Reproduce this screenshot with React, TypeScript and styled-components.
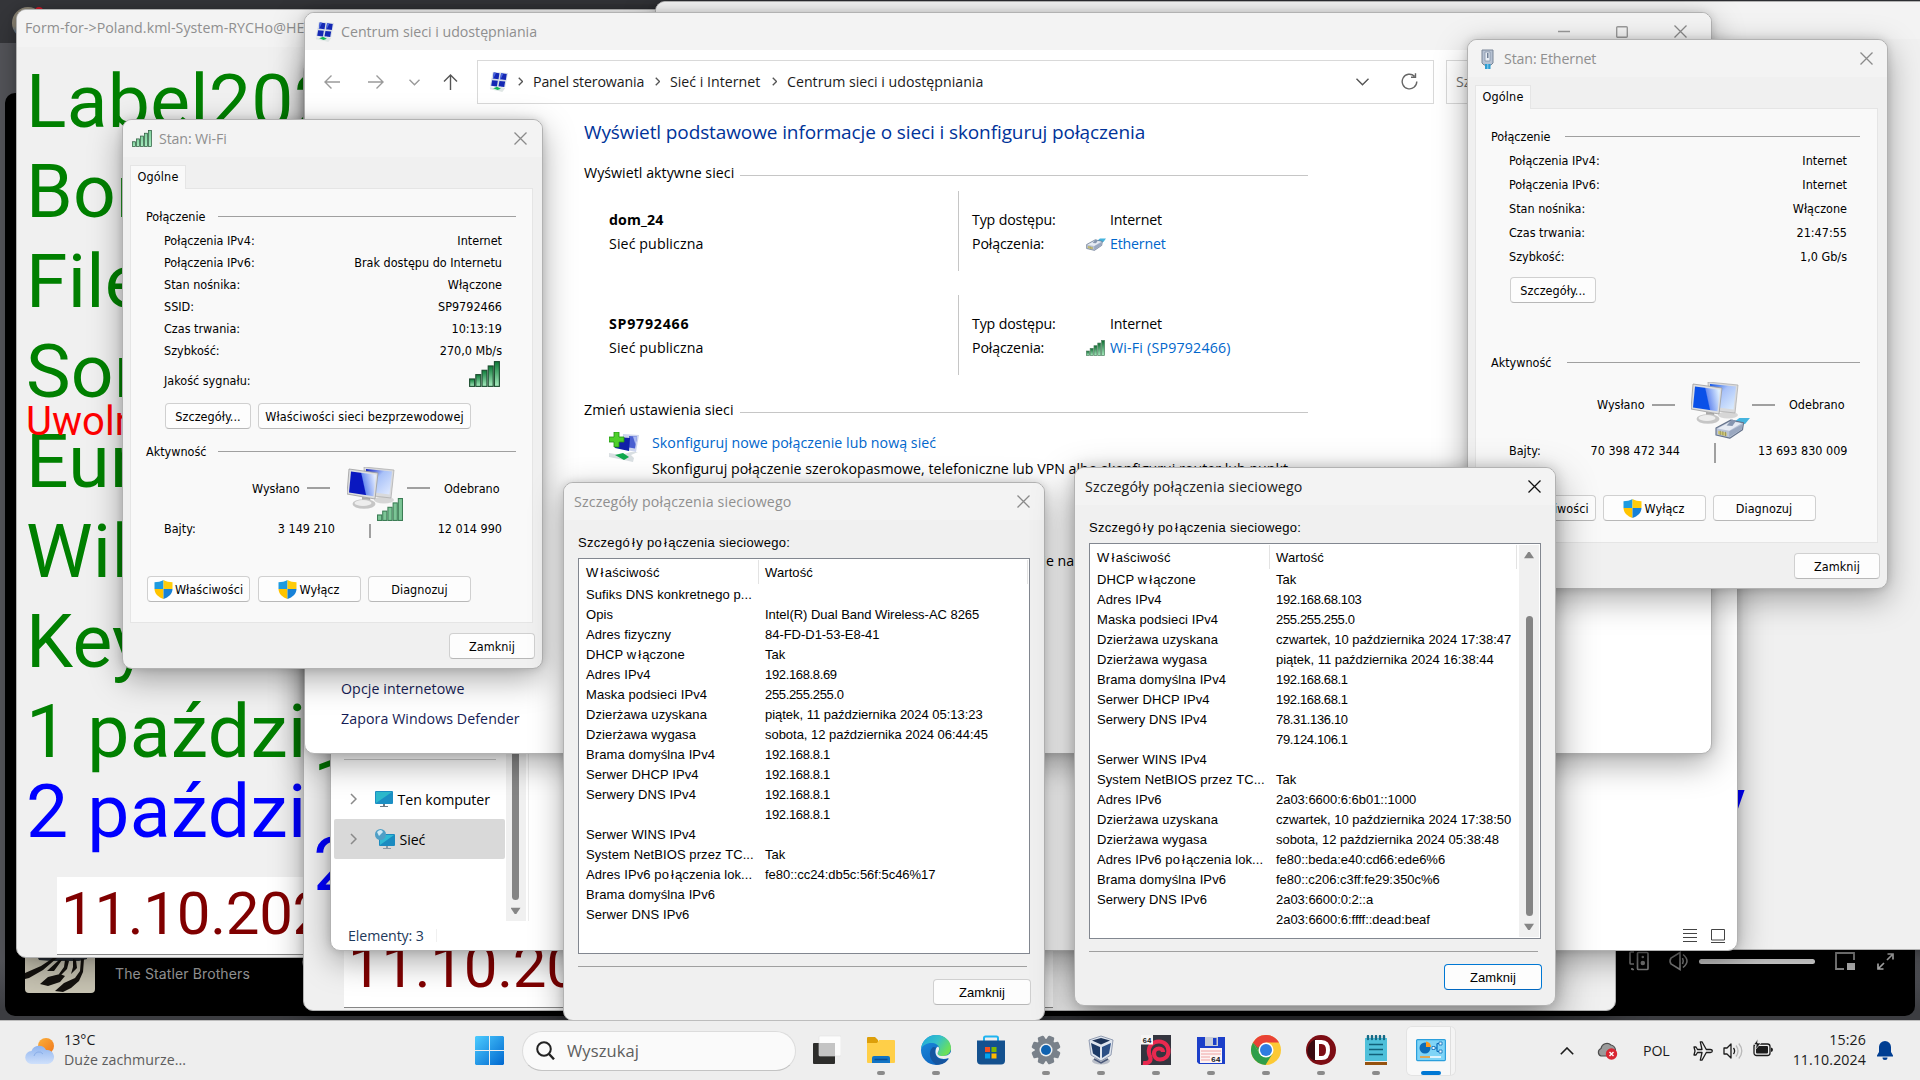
import React from "react";
import styled, { createGlobalStyle, css } from "styled-components";

const GlobalStyle = createGlobalStyle`
  html, body { margin: 0; padding: 0; overflow: hidden; background: #35363a; }
  *, *::before, *::after { box-sizing: border-box; }
  svg { display: block; flex: none; }
`;

const ui = css`
  font-family: "Open Sans", "Noto Sans", sans-serif;
  font-size: 14.2px;
  letter-spacing: 0.04px;
`;
const tahoma = css`
  font-family: "DejaVu Sans Condensed", "DejaVu Sans", sans-serif;
  font-stretch: condensed;
  font-size: 12.5px;
  letter-spacing: 0;
`;

const Desktop = styled.div`
  ${ui}
  position: relative;
  width: 1920px;
  height: 1080px;
  overflow: hidden;
  white-space: nowrap;
  color: #000;
  background: linear-gradient(#35363a 0 43px, #55565b 43px 960px, #3c3d41 1010px, #3c3d41);
`;

/* ---------- window frame ---------- */
const Win = styled.section<{ $x: number; $y: number; $w: number; $h: number; $bg?: string; $active?: boolean }>`
  position: absolute;
  left: ${(p) => p.$x}px;
  top: ${(p) => p.$y}px;
  width: ${(p) => p.$w}px;
  height: ${(p) => p.$h}px;
  display: flex;
  flex-direction: column;
  overflow: hidden;
  border: 1px solid #b2b2b2;
  border-radius: 10px;
  background: ${(p) => p.$bg ?? "#f0f0f0"};
  box-shadow: ${(p) =>
    p.$active ? "0 16px 40px rgba(0,0,0,.42), 0 0 14px rgba(0,0,0,.18)" : "0 10px 32px rgba(0,0,0,.34), 0 0 8px rgba(0,0,0,.14)"};
`;
const TitleBar = styled.header<{ $pad: number; $active?: boolean }>`
  flex: none;
  height: 37px;
  display: flex;
  align-items: center;
  padding-left: ${(p) => p.$pad}px;
  background: #f3f3f3;
  color: ${(p) => (p.$active ? "#1a1a1a" : "#8f8f8f")};
`;
const Caption = styled.span<{ $gap?: number; $ls?: number; $up?: number }>`
  margin-left: ${(p) => p.$gap ?? 0}px;
  letter-spacing: ${(p) => p.$ls ?? -0.12}px;
  flex: 1;
  padding-bottom: ${(p) => p.$up ?? 1}px;
`;
const CloseBox = styled.span<{ $right: number }>`
  margin-right: ${(p) => p.$right}px;
`;
const CloseIcon = ({ color = "#8a8a8a" }: { color?: string }) => (
  <svg width="13" height="13" viewBox="0 0 13 13">
    <path d="M.5.5l12 12M12.5.5l-12 12" stroke={color} strokeWidth="1.3" fill="none" />
  </svg>
);

/* ---------- media player behind everything ---------- */
const Player = styled.div`
  position: absolute;
  left: 5px;
  top: 93px;
  width: 1910px;
  height: 923px;
  border-radius: 10px;
  background: #000;
  display: flex;
  align-items: flex-end;
  padding: 0 21px 23px 20px;
`;
const Artist = styled.span`
  font-family: Inter, sans-serif;
  font-size: 14px;
  letter-spacing: 0.12px;
  color: #a3a3a3;
  margin: 0 0 11px 20px;
  flex: 1;
`;
const PlayerTools = styled.div`
  display: flex;
  align-items: center;
  height: 20px;
  margin-bottom: 22px;
  color: #8c8c8c;
`;
const Volume = styled.i`
  width: 116px;
  height: 5px;
  margin: 0 20px 0 10px;
  border-radius: 3px;
  background: #dcdcdc;
`;
const Plus = styled.span`
  margin: 0 0 21px 0;
  width: 1327px;
`;
const Avatar = styled.i`
  position: absolute;
  left: 12px;
  top: 7px;
  width: 32px;
  height: 32px;
  border-radius: 50%;
  background: linear-gradient(#8d8676 60%, #2c5d9a);
  &::after {
    content: "";
    position: absolute;
    right: 1px;
    top: 0;
    width: 8px;
    height: 8px;
    border-radius: 50%;
    background: #d11a2a;
  }
`;

/* ---------- form windows ---------- */
const FormBody = styled.div`
  position: relative;
  padding: 9px 0 0 9px;
  font-family: Roboto, sans-serif;
`;
const Big = styled.div<{ $color?: string; $up?: number; $indent?: number }>`
  height: 90px;
  line-height: 90px;
  margin-top: ${(p) => -(p.$up ?? 0)}px;
  padding-left: ${(p) => p.$indent ?? 0}px;
  font-size: 75px;
  letter-spacing: 0.3px;
  color: ${(p) => p.$color ?? "#008000"};
`;
const Unlock = styled.div`
  height: 0;
  position: relative;
  top: -17px;
  line-height: 46px;
  font-size: 40px;
  color: #f00;
`;
const DateField = styled.div`
  width: 709px;
  height: 78px;
  margin: 21px 0 0 31px;
  padding-left: 4px;
  line-height: 73px;
  font-size: 60px;
  letter-spacing: -0.3px;
  color: #800000;
  background: #fff;
  border-bottom: 1px solid #868686;
`;

interface FormProps {
  x: number;
  y: number;
  title?: string;
  lines: string[];
  unlock?: string;
  last: string;
  indent?: number;
  date?: string;
}
function FormWindow({ x, y, title, lines, unlock, last, indent, date }: FormProps) {
  return (
    <Win $x={x} $y={y} $w={1313} $h={949}>
      <TitleBar $pad={8}>
        <Caption $ls={0.05} $up={2}>
          {title}
        </Caption>
      </TitleBar>
      <FormBody>
        {lines.map((line, i) => (
          <React.Fragment key={i}>
            {i === 4 && unlock && <Unlock>{unlock}</Unlock>}
            <Big>{line}</Big>
          </React.Fragment>
        ))}
        <Big $color="#0000ff" $up={10} $indent={indent}>
          {last}
        </Big>
        <DateField>{date}</DateField>
      </FormBody>
    </Win>
  );
}

/* ---------- explorer ---------- */
const ExplorerMain = styled.div`
  flex: 1;
  display: flex;
`;
const Tree = styled.nav`
  width: 174.5px;
  display: flex;
  flex-direction: column;
  justify-content: flex-end;
  padding: 0 1px 62px 3px;
  letter-spacing: -0.1px;
`;
const TreeLine = styled.i`
  height: 1px;
  margin: 0 9px 19px 10px;
  background: #c9c9c9;
`;
const TreeRow = styled.div<{ $on?: boolean }>`
  height: 40px;
  display: flex;
  align-items: center;
  padding-left: 16px;
  border-radius: 2px;
  background: ${(p) => (p.$on ? "#d9d9d9" : "transparent")};
  span { margin-left: 5px; }
  svg + svg { margin-left: 18px; }
`;
const Track = styled.div`
  width: 20px;
  display: flex;
  flex-direction: column;
  align-items: center;
  justify-content: flex-end;
  background: #f0f0f0;
`;
const Thumb = styled.i<{ $h: number }>`
  width: 7px;
  height: ${(p) => p.$h}px;
  border-radius: 4px;
  background: #858585;
`;
const Arrow = styled.i<{ $down?: boolean; $m: string }>`
  width: 10px;
  height: 7px;
  margin: ${(p) => p.$m};
  background: #858585;
  clip-path: ${(p) => (p.$down ? "polygon(0 10%,100% 10%,58% 100%,42% 100%)" : "polygon(42% 0,58% 0,100% 90%,0 90%)")};
`;
const PaneEdge = styled.i`
  width: 1px;
  margin-left: 2px;
  background: #ececec;
`;
const StatusBar = styled.footer`
  height: 29px;
  display: flex;
  align-items: center;
  padding: 0 12px 0 17px;
  color: #1e395b;
  letter-spacing: -0.1px;
  i { width: 1px; height: 13px; margin-left: 12px; background: #f0f0f0; flex: none; }
  b { flex: 1; }
  svg + svg { margin-left: 14px; }
`;
const Chev = ({ c = "#8a8a8a", w = 1.5, s = 12 }: { c?: string; w?: number; s?: number }) => (
  <svg width={s * 0.55} height={s} viewBox="0 0 6.6 12" fill="none" stroke={c} strokeWidth={w}>
    <path d="M1 1l5 5-5 5" />
  </svg>
);

function Explorer() {
  return (
    <Win $x={330} $y={300} $w={1408} $h={651} $bg="#fff">
      <ExplorerMain>
        <Tree>
          <TreeLine />
          <TreeRow>
            <Chev />
            <svg width="18" height="16" viewBox="0 0 18 16">
              <rect width="18" height="13" rx="1" fill="#1c8fc4" />
              <path d="M1 1h16L1 12z" fill="#2db9cc" />
              <path d="M8 13h2v2h3v1H5v-1h3z" fill="#6d7b86" />
            </svg>
            <span>Ten komputer</span>
          </TreeRow>
          <TreeRow $on>
            <Chev />
            <svg width="20" height="20" viewBox="0 0 20 20">
              <rect x="4" y="5" width="16" height="12" rx="1" fill="#1b8bc0" />
              <path d="M5 6h14L5 16z" fill="#2fb9d4" />
              <path d="M11 17h2v2h3v1H8v-1h3z" fill="#8b98a3" />
              <circle cx="5.5" cy="5.5" r="5.5" fill="#4f9fc6" />
              <path d="M2 3q4-4 6 0L4 7z" fill="#cfe9f4" />
            </svg>
            <span>Sieć</span>
          </TreeRow>
        </Tree>
        <Track>
          <Thumb $h={420} />
          <Arrow $down $m="7px 0" />
        </Track>
        <PaneEdge />
      </ExplorerMain>
      <StatusBar>
        <span>Elementy: 3</span>
        <i />
        <b />
        <svg width="14" height="13" viewBox="0 0 14 13" stroke="#444" fill="none">
          <path d="M0 .5h14M0 4.5h14M0 8.5h14M0 12.5h14" />
        </svg>
        <svg width="14" height="14" viewBox="0 0 14 14" stroke="#444" fill="none">
          <path d="M.5.5h13v10.500h-13zM0 13.500h14" />
        </svg>
      </StatusBar>
    </Win>
  );
}

/* ---------- network drawings ---------- */
const NetTiles = () => (
  <svg width="19" height="20" viewBox="0 0 20 21">
    <path d="M4 0l16 1-3 15-16-1z" fill="#d5dce6" />
    <path d="M5 .5l6 .7-1 6.300-6-.7zM12.700 1.300l6 .7-1 6.300-6-.7zM3.300 8.600l6 .700-1 5.900-6-.700zM11 9.400l6 .700-1 5.700-6-.700z" fill="#1428b4" />
    <path d="M5 .5l2.500.3-3 6.300-.500-.3zM12.700 1.300l2.500.3-3 6.300-.500-.3z" fill="#4a67e0" />
    <path d="M1 16l7 1 4-1.500 5 1.500-3 4-4-1-9-2z" fill="#dfe6e4" />
    <path d="M4.500 17l4-1.500 4 2-3.500 1.500z" fill="#13b557" />
  </svg>
);
const Bars = ({ w, h, dark, edge }: { w: number; h: number; dark: string; edge: string }) => {
  const heights = [6, 9.500, 13, 16.500, 20];
  const id = `bars${w}x${h}`;
  return (
    <svg width={w} height={h} viewBox="0 0 25 21" preserveAspectRatio="none">
      <defs>
        <linearGradient id={id} x1="0" y1="0" x2="0" y2="1">
          <stop offset="0" stopColor={dark} />
          <stop offset="1" stopColor="#a8ecc0" />
        </linearGradient>
      </defs>
      {heights.map((v, i) => (
        <rect key={v} x={0.5 + i * 5} y={20.500 - v} width="4" height={v} fill={`url(#${id})`} stroke={edge} strokeWidth=".9" />
      ))}
    </svg>
  );
};
const PlugShape = () => (
  <g strokeLinejoin="round">
    <path d="M18 3l4-3h10l-4 5-7 4z" fill="#45b4de" />
    <path d="M0 9.500L14 2l12 2.500-1 6.500-12 8-13-3z" fill="#b9c3d6" stroke="#66748c" strokeWidth="1.100" />
    <path d="M1.500 10l13-7 9.500 2-11.500 7z" fill="#e6ebf3" />
    <path d="M12.500 12.500L25 6l-.8 4.700L12.500 18z" fill="#9aa8c0" />
    <path d="M2 12l8 1.800v3.500L2 15.200z" fill="#d2c973" />
    <path d="M4 12v4M6.500 12.500v4M9 13v4" stroke="#8d8a5a" strokeWidth=".8" />
    <path d="M10 7l5-5.500 4 1-3.500 5z" fill="#8696b0" />
  </g>
);
const Plug = () => (
  <svg width="20" height="13" viewBox="-1 -1 33 21" preserveAspectRatio="none">
    <PlugShape />
  </svg>
);
const Monitors = ({ blue, light, w, h, children }: { blue: string; light: string; w: number; h: number; children: React.ReactNode }) => {
  const id = "scr" + blue.slice(1);
  return (
    <svg width={w} height={h} viewBox={`0 0 ${w} ${h}`}>
      <defs>
        <linearGradient id={id} x1="0" y1=".6" x2="1" y2=".4">
          <stop offset="0" stopColor={blue} />
          <stop offset=".52" stopColor={blue} />
          <stop offset=".56" stopColor="#6d8ff0" />
          <stop offset="1" stopColor={light} />
        </linearGradient>
        <linearGradient id={id + "b"} x1="0" y1="0" x2="1" y2="1">
          <stop offset="0" stopColor={blue} />
          <stop offset=".4" stopColor="#a9c2f8" />
          <stop offset="1" stopColor={light} />
        </linearGradient>
      </defs>
      <ellipse cx="37" cy="33" rx="10" ry="3.500" fill="#d6d6d6" />
      <path d="M17 0l30 3-3 28-26-3z" fill="#d9dadc" stroke="#a7a7a7" strokeWidth=".7" />
      <path d="M19 2l26 2.500-2.500 23-23-3z" fill={`url(#${id}b)`} />
      <path d="M15 30l8 1 1 5h-9z" fill="#a9a9a9" />
      <ellipse cx="17" cy="37" rx="11.500" ry="4.800" fill="#c6c6c6" />
      <ellipse cx="16" cy="36" rx="8.500" ry="3" fill="#ededed" />
      <path d="M2 2l29 4-3 26-28-5z" fill="#dedfe1" stroke="#9c9c9c" strokeWidth=".8" />
      <path d="M4 4.500l25 3.200-2.500 21.500L2 25.400z" fill={`url(#${id})`} />
      {children}
    </svg>
  );
};
const Shield = () => (
  <svg width="19" height="19" viewBox="0 0 19 19">
    <path d="M9.500 0C7 1.600 3.600 2.200.5 2.200V9h9z" fill="#1e9be0" />
    <path d="M9.500 0c2.500 1.600 5.900 2.200 9 2.200V9h-9z" fill="#ffcc0a" />
    <path d="M.5 9c.2 5 4 8.200 9 10V9z" fill="#ffc400" />
    <path d="M18.500 9c-.2 5-4 8.200-9 10V9z" fill="#1681d8" />
  </svg>
);

/* ---------- control panel window ---------- */
const WinButtons = styled.div`
  display: flex;
  align-items: center;
  gap: 46px;
  margin-right: 24px;
`;
const NavRow = styled.div`
  height: 64px;
  flex: none;
  display: flex;
  align-items: center;
`;
const NavArrows = styled.div`
  width: 172px;
  display: flex;
  align-items: center;
  padding-left: 19px;
  svg:nth-child(2) { margin-left: 28px; }
  svg:nth-child(3) { margin-left: 25px; }
  svg:nth-child(4) { margin-left: 23px; }
`;
const Address = styled.div`
  width: 957px;
  height: 44px;
  display: flex;
  align-items: center;
  padding: 0 0 1px 11px;
  border: 1px solid #d9d9d9;
  color: #1b1b1b;
`;
const Crumb = styled.span<{ $w: number; $ls?: number }>`
  width: ${(p) => p.$w}px;
  margin-left: 10px;
  letter-spacing: ${(p) => p.$ls ?? -0.15}px;
`;
const AddressEnd = styled.div`
  flex: 1;
  display: flex;
  justify-content: flex-end;
  align-items: center;
  gap: 32px;
  padding-right: 15px;
`;
const SearchBox = styled.div`
  width: 250px;
  height: 44px;
  margin-left: 12px;
  padding-left: 9px;
  line-height: 42px;
  border: 1px solid #d9d9d9;
  color: #6f6f6f;
`;
const Columns = styled.div`
  flex: 1;
  display: flex;
`;
const SideLinks = styled.aside`
  width: 279px;
  padding: 0 0 19px 36px;
  display: flex;
  flex-direction: column;
  justify-content: flex-end;
  line-height: 30px;
  letter-spacing: 0.08px;
  color: #151c55;
`;
const Main = styled.main`
  width: 724px;
`;
const Heading = styled.h1`
  margin: 0;
  height: 36px;
  line-height: 36px;
  font-size: 19px;
  font-weight: 400;
  letter-spacing: -0.11px;
  color: #003399;
`;
const Section = styled.div<{ $top: number }>`
  height: 22px;
  line-height: 22px;
  margin-top: ${(p) => p.$top}px;
  display: flex;
  align-items: flex-start;
  &::after {
    content: "";
    flex: 1;
    height: 1px;
    margin: 13px 0 0 6px;
    background: #c6c6c6;
  }
`;
const Net = styled.div<{ $top: number }>`
  height: 80px;
  margin-top: ${(p) => p.$top}px;
  display: flex;
  line-height: 24px;
`;
const NetName = styled.div<{ $ls: number }>`
  width: 375px;
  padding: 17px 0 0 25px;
  border-right: 1px solid #c6c6c6;
  letter-spacing: 0.1px;
  b { display: block; letter-spacing: ${(p) => p.$ls}px; }
`;
const NetFacts = styled.dl`
  margin: 0;
  padding: 17px 0 0 13px;
  display: grid;
  grid-template-columns: 114px 24px auto;
  grid-auto-rows: 24px;
  letter-spacing: -0.15px;
  dt, dd { margin: 0; }
  dd { grid-column: 3; }
  svg { align-self: center; }
`;
const Link = styled.dd<{ $ls: number }>`
  color: #0066cc;
  letter-spacing: ${(p) => p.$ls}px;
`;
const Task = styled.div`
  height: 92px;
  display: flex;
  padding: 10px 0 0 25px;
  white-space: nowrap;
  > svg { margin: 1px 13px 0 0; }
  a { display: block; height: 25px; line-height: 24px; color: #0066cc; }
  p { margin: 0; line-height: 26px; letter-spacing: 0.01px; }
`;
const TaskText = styled.div`
  margin: 25px 0 0 43px;
  line-height: 26px;
  letter-spacing: 0;
`;

function Network(props: { name: string; nameLs: number; link: string; linkLs: number; icon: React.ReactNode; top: number }) {
  return (
    <Net $top={props.top}>
      <NetName $ls={props.nameLs}>
        <b>{props.name}</b>
        Sieć publiczna
      </NetName>
      <NetFacts>
        <dt>Typ dostępu:</dt>
        <dd>Internet</dd>
        <dt>Połączenia:</dt>
        {props.icon}
        <Link $ls={props.linkLs}>{props.link}</Link>
      </NetFacts>
    </Net>
  );
}

function SharingCenter() {
  const stroke = { fill: "none", stroke: "#9a9a9a", strokeWidth: 1.400 };
  return (
    <Win $x={304} $y={12} $w={1408} $h={742} $bg="#fff">
      <TitleBar $pad={10}>
        <NetTiles />
        <Caption $gap={7} $ls={-0.01}>
          Centrum sieci i udostępniania
        </Caption>
        <WinButtons>
          <svg width="12" height="12" viewBox="0 0 12 12" {...stroke}>
            <path d="M0 5.500h12" />
          </svg>
          <svg width="12" height="12" viewBox="0 0 12 12" {...stroke}>
            <rect x=".7" y=".7" width="10.600" height="10.600" rx="1" />
          </svg>
          <CloseIcon />
        </WinButtons>
      </TitleBar>
      <NavRow>
        <NavArrows>
          <svg width="16" height="14" viewBox="0 0 16 14" {...stroke}>
            <path d="M16 7H1M7.500.5L1 7l6.500 6.500" />
          </svg>
          <svg width="16" height="14" viewBox="0 0 16 14" {...stroke}>
            <path d="M0 7h15M8.500.5L15 7l-6.500 6.500" />
          </svg>
          <svg width="11" height="7" viewBox="0 0 11 7" {...stroke}>
            <path d="M.5.7l5 5 5-5" />
          </svg>
          <svg width="15" height="16" viewBox="0 0 15 16" {...stroke} stroke="#555">
            <path d="M7.500 16V1M1 7.500L7.500 1 14 7.500" />
          </svg>
        </NavArrows>
        <Address>
          <NetTiles />
          <Crumb $w={5}>
            <Chev s={9} c="#555" w={1.800} />
          </Crumb>
          <Crumb $w={112}>Panel sterowania</Crumb>
          <Crumb $w={5}>
            <Chev s={9} c="#555" w={1.800} />
          </Crumb>
          <Crumb $w={92} $ls={0}>
            Sieć i Internet
          </Crumb>
          <Crumb $w={5}>
            <Chev s={9} c="#555" w={1.800} />
          </Crumb>
          <Crumb $w={200} $ls={0}>
            Centrum sieci i udostępniania
          </Crumb>
          <AddressEnd>
            <svg width="13" height="8" viewBox="0 0 13 8" {...stroke} stroke="#555">
              <path d="M.5.800l6 6 6-6" />
            </svg>
            <svg width="17" height="17" viewBox="0 0 17 17" {...stroke} stroke="#666">
              <path d="M15.800 8.500A7.300 7.300 0 1 1 13.500 3.200M14.500.2v4h-4.500" />
            </svg>
          </AddressEnd>
        </Address>
        <SearchBox>Sz</SearchBox>
      </NavRow>
      <Columns>
        <SideLinks>
          <span>Opcje internetowe</span>
          <span>Zapora Windows Defender</span>
        </SideLinks>
        <Main>
          <Heading>Wyświetl podstawowe informacje o sieci i skonfiguruj połączenia</Heading>
          <Section $top={12}>Wyświetl aktywne sieci</Section>
          <Network top={7} name="dom_24" nameLs={0.1} link="Ethernet" linkLs={-0.2} icon={<Plug />} />
          <Network
            top={24}
            name="SP9792466"
            nameLs={0.75}
            link="Wi-Fi (SP9792466)"
            linkLs={0.2}
            icon={<Bars w={19} h={16} dark="#0c6b2f" edge="#4f7f60" />}
          />
          <Section $top={24}>Zmień ustawienia sieci</Section>
          <Task>
            <svg width="30" height="30" viewBox="0 0 30 30">
              <path d="M14 2l16 1-3 17-14-3z" fill="#cdd5ee" />
              <path d="M20 4l8 .500-2 12-6-1z" fill="#4a5fd0" />
              <path d="M24 4.500l4 .200-1.500 8z" fill="#a9b8f0" />
              <path d="M7 5l14 1-1 13-14-3z" fill="#1020a8" />
              <path d="M5 0h5v5h5v5h-5v5H5v-5H0V5h5z" fill="#4fd02a" stroke="#1f8f12" strokeWidth=".8" />
              <path d="M0 21l12 2 10-3h7l-7 3 3 3-1 4-9-2-15-3z" fill="#d9dfe2" />
              <path d="M6 23l8-2 6 4-5 3z" fill="#10a84e" />
            </svg>
            <div>
              <a>Skonfiguruj nowe połączenie lub nową sieć</a>
              <p>Skonfiguruj połączenie szerokopasmowe, telefoniczne lub VPN albo skonfiguruj router lub punkt</p>
            </div>
          </Task>
          <Task>
            <TaskText>Zdiagnozuj i rozwiąż problemy z siecią lub uzyskaj informacje na</TaskText>
          </Task>
        </Main>
      </Columns>
    </Win>
  );
}

/* ---------- adapter status dialogs ---------- */
const Tabs = styled.div<{ $left: number }>`
  ${tahoma}
  display: flex;
  flex-direction: column;
  align-items: flex-start;
  padding: 8px 0 0 ${(p) => p.$left}px;
`;
const Tab = styled.div`
  z-index: 1;
  width: 56px;
  height: 24px;
  margin-bottom: -1px;
  line-height: 22px;
  text-align: center;
  letter-spacing: 0.15px;
  background: #f9f9f9;
  border: 1px solid #e5e5e5;
  border-bottom: 0;
`;
const Panel = styled.div<{ $gut: number }>`
  width: 403px;
  height: 435px;
  padding: 17px ${(p) => p.$gut}px 0 15px;
  background: #f9f9f9;
  border: 1px solid #e5e5e5;
`;
const Group = styled.div<{ $top?: number; $label: number }>`
  height: 22px;
  line-height: 22px;
  display: flex;
  margin-top: ${(p) => p.$top ?? 0}px;
  span { width: ${(p) => p.$label}px; }
  i { flex: 1; height: 1px; background: #a0a0a0; margin-top: 10px; }
`;
const Facts = styled.div<{ $right: number; $shift?: number }>`
  padding: ${(p) => p.$shift ?? 0}px ${(p) => p.$right}px 0 18px;
`;
const Fact = styled.div<{ $h: number }>`
  height: ${(p) => p.$h}px;
  display: flex;
  align-items: center;
  justify-content: space-between;
`;
const Signal = styled.span`
  align-self: flex-start;
  padding: 0 2px 0 0;
`;
const Row = styled.div<{ $top: number; $left: number; $gap?: number }>`
  display: flex;
  gap: ${(p) => p.$gap ?? 7}px;
  margin: ${(p) => p.$top}px 0 0 ${(p) => p.$left}px;
`;
const Button = styled.button<{ $w: number; $primary?: boolean; $ls?: number }>`
  width: ${(p) => p.$w}px;
  height: 26px;
  display: flex;
  flex: none;
  align-items: center;
  justify-content: center;
  gap: 2px;
  padding: 0;
  white-space: nowrap;
  font: inherit;
  letter-spacing: ${(p) => p.$ls ?? 0.05}px;
  color: #000;
  background: #fdfdfd;
  border: 1px solid ${(p) => (p.$primary ? "#0078d4" : "#d0d0d0")};
  border-bottom-color: ${(p) => (p.$primary ? "#0067c0" : "#b8b8b8")};
  border-radius: 4px;
`;
const Traffic = styled.div<{ $h: number; $left: number }>`
  height: ${(p) => p.$h}px;
  display: flex;
  align-items: center;
  padding-left: ${(p) => p.$left}px;
`;
const Word = styled.span<{ $w: number; $in?: number }>`
  width: ${(p) => p.$w}px;
  padding-left: ${(p) => p.$in ?? 0}px;
`;
const Dash = styled.i`
  width: 23px;
  height: 2px;
  background: #a0a0a0;
`;
const Pic = styled.span<{ $top: number; $m: string }>`
  align-self: flex-start;
  height: 20px;
  padding-top: ${(p) => p.$top}px;
  margin: ${(p) => p.$m};
`;
const Bytes = styled.div<{ $h: number; $a: number; $b: number; $bar: number; $right: number }>`
  height: ${(p) => p.$h}px;
  display: flex;
  align-items: center;
  padding: 0 ${(p) => p.$right}px 0 18px;
  span:nth-of-type(2) { width: ${(p) => p.$a}px; text-align: right; }
  i { width: 2px; height: ${(p) => p.$bar}px; margin: 6px 0 0 ${(p) => p.$b}px; background: #a0a0a0; }
  span:last-child { flex: 1; text-align: right; }
`;
const Foot = styled.div<{ $top: number }>`
  ${tahoma}
  display: flex;
  justify-content: flex-end;
  padding: ${(p) => p.$top}px 7px 0 0;
`;

function WifiStatus() {
  const facts = [
    ["Połączenia IPv4:", "Internet"],
    ["Połączenia IPv6:", "Brak dostępu do Internetu"],
    ["Stan nośnika:", "Włączone"],
    ["SSID:", "SP9792466"],
    ["Czas trwania:", "10:13:19"],
    ["Szybkość:", "270,0 Mb/s"],
  ];
  return (
    <Win $x={122} $y={119} $w={421} $h={550}>
      <TitleBar $pad={9}>
        <Bars w={20} h={17} dark="#7fcf9c" edge="#2c5a3d" />
        <Caption $gap={7}>Stan: Wi-Fi</Caption>
        <CloseBox $right={15}>
          <CloseIcon />
        </CloseBox>
      </TitleBar>
      <Tabs $left={7}>
        <Tab>Ogólne</Tab>
        <Panel $gut={16}>
          <Group $label={72}>
            <span>Połączenie</span>
            <i />
          </Group>
          <Facts $right={14} $shift={1}>
            {facts.map(([k, v]) => (
              <Fact key={k} $h={22}>
                <span>{k}</span>
                <span>{v}</span>
              </Fact>
            ))}
            <Fact $h={39}>
              <span>Jakość sygnału:</span>
              <Signal>
                <Bars w={31} h={26} dark="#0d7a38" edge="#1d4d30" />
              </Signal>
            </Fact>
          </Facts>
          <Row $top={3} $left={19}>
            <Button $w={86}>Szczegóły...</Button>
            <Button $w={213} $ls={0.15}>
              Właściwości sieci bezprzewodowej
            </Button>
          </Row>
          <Group $top={12} $label={72}>
            <span>Aktywność</span>
            <i />
          </Group>
          <Traffic $h={50} $left={106}>
            <Word $w={55}>Wysłano</Word>
            <Dash />
            <Pic $top={4} $m="0 4px 0 17px">
              <Monitors blue="#0a18c0" light="#e3ecff" w={56} h={54}>
                <svg x="30" y="31" width="26" height="23" viewBox="0 0 25 21" preserveAspectRatio="none">
                  {[5, 8.500, 12, 16, 20].map((v, i) => (
                    <rect key={v} x={0.5 + i * 5} y={20.500 - v} width="4" height={v} fill="#7cc596" stroke="#3c7d55" />
                  ))}
                </svg>
              </Monitors>
            </Pic>
            <Dash />
            <Word $w={70} $in={14}>
              Odebrano
            </Word>
          </Traffic>
          <Bytes $h={30} $a={139} $b={34} $bar={14} $right={14}>
            <Word $w={32}>Bajty:</Word>
            <span>3 149 210</span>
            <i />
            <span>12 014 990</span>
          </Bytes>
          <Row $top={33} $left={1} $gap={7.5}>
            <Button $w={103}>
              <Shield />
              Właściwości
            </Button>
            <Button $w={103}>
              <Shield />
              Wyłącz
            </Button>
            <Button $w={103}>Diagnozuj</Button>
          </Row>
        </Panel>
      </Tabs>
      <Foot $top={10}>
        <Button $w={86}>Zamknij</Button>
      </Foot>
    </Win>
  );
}

function EthernetStatus() {
  const facts = [
    ["Połączenia IPv4:", "Internet"],
    ["Połączenia IPv6:", "Internet"],
    ["Stan nośnika:", "Włączone"],
    ["Czas trwania:", "21:47:55"],
    ["Szybkość:", "1,0 Gb/s"],
  ];
  return (
    <Win $x={1467} $y={39} $w={421} $h={550}>
      <TitleBar $pad={13}>
        <svg width="13" height="20" viewBox="0 0 13 20">
          <path d="M1 1h11v13l-2 2H3l-2-2z" fill="#b6c1d2" stroke="#7a8798" />
          <path d="M4 3h5v9H4z" fill="#e9eef5" stroke="#8492a6" strokeWidth=".8" />
          <path d="M6 4h1.500v5H6z" fill="#6f7f96" />
          <path d="M4 15h5.500v5H4z" fill="#2e9bd0" />
          <path d="M6.300 15h1v5h-1z" fill="#8fd4f0" />
        </svg>
        <Caption $gap={10}>Stan: Ethernet</Caption>
        <CloseBox $right={14}>
          <CloseIcon />
        </CloseBox>
      </TitleBar>
      <Tabs $left={7}>
        <Tab>Ogólne</Tab>
        <Panel $gut={17}>
          <Group $label={74}>
            <span>Połączenie</span>
            <i />
          </Group>
          <Facts $right={13}>
            {facts.map(([k, v]) => (
              <Fact key={k} $h={24}>
                <span>{k}</span>
                <span>{v}</span>
              </Fact>
            ))}
          </Facts>
          <Row $top={9} $left={19}>
            <Button $w={86}>Szczegóły...</Button>
          </Row>
          <Group $top={49} $label={76}>
            <span>Aktywność</span>
            <i />
          </Group>
          <Traffic $h={61} $left={106}>
            <Word $w={55}>Wysłano</Word>
            <Dash />
            <Pic $top={8} $m="0 2px 0 16px">
              <Monitors blue="#0a50e8" light="#dff0ff" w={59} h={57}>
                <g transform="translate(25 36) scale(1.06)">
                  <PlugShape />
                </g>
              </Monitors>
            </Pic>
            <Dash />
            <Word $w={70} $in={14}>
              Odebrano
            </Word>
          </Traffic>
          <Bytes $h={30} $a={139} $b={34} $bar={20} $right={12.5}>
            <Word $w={32}>Bajty:</Word>
            <span>70 398 472 344</span>
            <i />
            <span>13 693 830 009</span>
          </Bytes>
          <Row $top={30} $left={1.5}>
            <Button $w={103}>
              <Shield />
              Właściwości
            </Button>
            <Button $w={103}>
              <Shield />
              Wyłącz
            </Button>
            <Button $w={103}>Diagnozuj</Button>
          </Row>
        </Panel>
      </Tabs>
      <Foot $top={10}>
        <Button $w={86}>Zamknij</Button>
      </Foot>
    </Win>
  );
}

/* ---------- connection details dialogs ---------- */
const Details = styled.div<{ $left: number }>`
  padding: 13px 0 0 ${(p) => p.$left}px;
  font-family: "Liberation Sans", Arial, sans-serif;
  font-size: 13px;
`;
const DetailsLabel = styled.div`
  height: 20px;
  line-height: 20px;
  margin-bottom: 5px;
  letter-spacing: 0.3px;
`;
const Loose = styled.span`
  margin: 0 1px 0 2px;
`;
const List = styled.div`
  width: 452px;
  height: 396px;
  display: flex;
  background: #fff;
  border: 1px solid #828790;
`;
const Table = styled.div`
  flex: 1;
`;
const Key = styled.div`
  width: 180px;
  padding-left: 7px;
  letter-spacing: 0.1px;
`;
const Value = styled.div<{ $dotted?: boolean }>`
  flex: 1;
  padding-left: 6px;
  letter-spacing: ${(p) => (p.$dotted ? -0.35 : -0.03)}px;
`;
const Cells = styled.div<{ $head?: boolean }>`
  height: 20px;
  line-height: 20px;
  display: flex;
  ${(p) =>
    p.$head &&
    css`
      padding-top: 1px;
      height: 26px;
      line-height: 25px;
      > div { height: 24px; border-right: 1px solid #e3e3e3; }
      > div:first-child { letter-spacing: 0.3px; }
      > div:last-child { margin-right: 1px; letter-spacing: 0.1px; }
    `}
`;
const Rule = styled.i`
  display: block;
  width: 449px;
  height: 1px;
  margin: 12px 0;
  background: #a0a0a0;
`;
const DetailsFoot = styled.div`
  width: 453px;
  display: flex;
  justify-content: flex-end;
`;
const DetailsTrack = styled(Track)`
  margin: 1px;
  justify-content: flex-start;
`;

/* The dialog font draws the stroked l wider than its neighbours. */
const spaced = (text: string) =>
  text.split("ł").map((part, i) => (
    <React.Fragment key={i}>
      {i > 0 && <Loose>ł</Loose>}
      {part}
    </React.Fragment>
  ));

function DetailsWindow(props: { x: number; y: number; active?: boolean; rows: string[][] }) {
  const { x, y, active, rows } = props;
  return (
    <Win $x={x} $y={y} $w={482} $h={539} $active={active}>
      <TitleBar $pad={10} $active={active}>
        <Caption $ls={0.15}>Szczegóły połączenia sieciowego</Caption>
        <CloseBox $right={14}>
          <CloseIcon color={active ? "#111" : undefined} />
        </CloseBox>
      </TitleBar>
      <Details $left={14}>
        <DetailsLabel>{spaced("Szczegóły połączenia sieciowego:")}</DetailsLabel>
        <List>
          <Table>
            <Cells $head>
              <Key>{spaced("Właściwość")}</Key>
              <Value>Wartość</Value>
            </Cells>
            {rows.map(([k, v], i) => (
              <Cells key={i}>
                <Key>{spaced(k)}</Key>
                <Value $dotted={/^\d+\.\d+\./.test(v)}>{v}</Value>
              </Cells>
            ))}
          </Table>
          {active && (
            <DetailsTrack>
              <Arrow $m="7px 0 57px" />
              <Thumb $h={300} />
              <Arrow $down $m="7px 0 0" />
            </DetailsTrack>
          )}
        </List>
        <Rule />
        <DetailsFoot>
          <Button $w={98} $primary={active}>
            Zamknij
          </Button>
        </DetailsFoot>
      </Details>
    </Win>
  );
}

const wifiRows = [
  ["Sufiks DNS konkretnego p...", ""],
  ["Opis", "Intel(R) Dual Band Wireless-AC 8265"],
  ["Adres fizyczny", "84-FD-D1-53-E8-41"],
  ["DHCP włączone", "Tak"],
  ["Adres IPv4", "192.168.8.69"],
  ["Maska podsieci IPv4", "255.255.255.0"],
  ["Dzierżawa uzyskana", "piątek, 11 października 2024 05:13:23"],
  ["Dzierżawa wygasa", "sobota, 12 października 2024 06:44:45"],
  ["Brama domyślna IPv4", "192.168.8.1"],
  ["Serwer DHCP IPv4", "192.168.8.1"],
  ["Serwery DNS IPv4", "192.168.8.1"],
  ["", "192.168.8.1"],
  ["Serwer WINS IPv4", ""],
  ["System NetBIOS przez TC...", "Tak"],
  ["Adres IPv6 połączenia lok...", "fe80::cc24:db5c:56f:5c46%17"],
  ["Brama domyślna IPv6", ""],
  ["Serwer DNS IPv6", ""],
];
const ethernetRows = [
  ["DHCP włączone", "Tak"],
  ["Adres IPv4", "192.168.68.103"],
  ["Maska podsieci IPv4", "255.255.255.0"],
  ["Dzierżawa uzyskana", "czwartek, 10 października 2024 17:38:47"],
  ["Dzierżawa wygasa", "piątek, 11 października 2024 16:38:44"],
  ["Brama domyślna IPv4", "192.168.68.1"],
  ["Serwer DHCP IPv4", "192.168.68.1"],
  ["Serwery DNS IPv4", "78.31.136.10"],
  ["", "79.124.106.1"],
  ["Serwer WINS IPv4", ""],
  ["System NetBIOS przez TC...", "Tak"],
  ["Adres IPv6", "2a03:6600:6:6b01::1000"],
  ["Dzierżawa uzyskana", "czwartek, 10 października 2024 17:38:50"],
  ["Dzierżawa wygasa", "sobota, 12 października 2024 05:38:48"],
  ["Adres IPv6 połączenia lok...", "fe80::beda:e40:cd66:ede6%6"],
  ["Brama domyślna IPv6", "fe80::c206:c3ff:fe29:350c%6"],
  ["Serwery DNS IPv6", "2a03:6600:0:2::a"],
  ["", "2a03:6600:6:ffff::dead:beaf"],
];

/* ---------- taskbar ---------- */
const Bar = styled.footer`
  position: absolute;
  left: 0;
  right: 0;
  bottom: 0;
  height: 60px;
  display: flex;
  align-items: center;
  background: #eeeeee;
  border-top: 1px solid #bdbdbd;
`;
const Weather = styled.div`
  width: 475px;
  display: flex;
  align-items: center;
  padding-left: 25px;
  line-height: 20px;
  color: #1b1b1b;
  div { margin: -2px 0 0 9px; }
  span { display: block; color: #5c5c5c; letter-spacing: 0.08px; }
`;
const Search = styled.div`
  width: 274px;
  height: 40px;
  margin: 0 11px 0 18px;
  display: flex;
  align-items: center;
  padding: 0 0 1px 13px;
  border: 1px solid #dcdcdc;
  border-bottom-color: #c4c4c4;
  border-radius: 20px;
  background: #fafafa;
  color: #5e5e5e;
  font-size: 16.500px;
  letter-spacing: 0.1px;
  span { margin-left: 12px; }
`;
const Apps = styled.div`
  display: flex;
  margin-left: -5px;
`;
const AppIcon = styled.div<{ $state?: "open" | "active" }>`
  position: relative;
  width: 48px;
  height: 48px;
  margin-right: 7px;
  display: flex;
  align-items: center;
  justify-content: center;
  padding-bottom: 1px;
  border-radius: 5px;
  ${(p) =>
    p.$state === "active" &&
    css`
      background: linear-gradient(90deg, #f8f8f8 43px, #dedede 43px 44px, #f4f4f4 44px);
      box-shadow: 0 0 0 1px #e3e3e3;
    `}
  ${(p) =>
    p.$state &&
    css`
      &::after {
        content: "";
        position: absolute;
        bottom: 0;
        left: ${p.$state === "active" ? 14 : 20}px;
        width: ${p.$state === "active" ? 20 : 8}px;
        height: 4px;
        border-radius: 2px;
        background: ${p.$state === "active" ? "#0078d4" : "#8a8a8a"};
      }
    `}
`;
const Tray = styled.div`
  margin-left: auto;
  display: flex;
  align-items: center;
  padding-right: 27px;
  color: #1b1b1b;
  > svg + svg { margin-left: 10px; }
  > svg:nth-child(2) { margin-left: 23px; }
  > svg:nth-child(6) { margin-top: -6px; }
`;
const Lang = styled.span`
  width: 26px;
  margin: 0 24px 0 25px;
  letter-spacing: -0.15px;
`;
const Clock = styled.div`
  width: 92px;
  margin: -2px 11px 0 0;
  text-align: right;
  line-height: 20px;
  letter-spacing: 0.1px;
`;
const G30 = ({ children }: { children: React.ReactNode }) => (
  <svg width="30" height="30" viewBox="0 0 30 30">
    {children}
  </svg>
);
const gear = Array.from({ length: 8 }, (_, i) => i * 45);

function Taskbar() {
  return (
    <Bar>
      <Weather>
        <svg width="30" height="26" viewBox="0 0 30 26">
          <defs>
            <linearGradient id="sun" x1="0" y1="0" x2="1" y2="1">
              <stop offset="0" stopColor="#fbb03b" />
              <stop offset="1" stopColor="#f0761b" />
            </linearGradient>
            <linearGradient id="cloud" x1="0" y1="0" x2="0" y2="1">
              <stop offset="0" stopColor="#8fb4ef" />
              <stop offset="1" stopColor="#cfe0fb" />
            </linearGradient>
          </defs>
          <circle cx="21" cy="8" r="8" fill="url(#sun)" />
          <path d="M7 26a6.500 6.500 0 0 1-.5-13A8 8 0 0 1 21 12a7 7 0 0 1 2 14z" fill="url(#cloud)" />
          <path d="M9 18a5 5 0 0 1 9-2" stroke="#8aaee8" fill="none" />
        </svg>
        <div>
          13°C
          <span>Duże zachmurze...</span>
        </div>
      </Weather>
      <svg width="29" height="29" viewBox="0 0 29 29">
        <defs>
          <linearGradient id="start" x1="0" y1="0" x2="1" y2="1">
            <stop offset="0" stopColor="#4cccff" />
            <stop offset="1" stopColor="#0067cf" />
          </linearGradient>
        </defs>
        <path d="M1 0h13v14H0V1zM15 0h13l1 1v13H15zM0 15h14v14H1l-1-1zM15 15h14v13l-1 1H15z" fill="url(#start)" />
      </svg>
      <Search>
        <svg width="19" height="19" viewBox="0 0 19 19" fill="none" stroke="#222" strokeWidth="2">
          <circle cx="8" cy="8" r="6.800" />
          <path d="M12.800 12.800l5.200 5.500" strokeWidth="2.400" />
        </svg>
        <span>Wyszukaj</span>
      </Search>
      <Apps>
        <AppIcon>
          <G30>
            <rect x="2" y="8" width="22" height="21" rx="1" fill="#2d2d2b" />
            <rect x="8" y="1" width="22" height="20" rx="1" fill="#fff" fillOpacity=".8" stroke="#e0e0e0" strokeWidth=".6" />
            <rect x="8" y="8" width="16" height="13" fill="#c4c4c4" />
          </G30>
        </AppIcon>
        <AppIcon $state="open">
          <G30>
            <path d="M1 3q0-1 1-1h7l3 3v4H1z" fill="#dd9f0a" />
            <path d="M1 8h10l2-3h15q1 0 1 1v21q0 1-1 1H2q-1 0-1-1z" fill="#ffcf48" />
            <path d="M6 28v-5q0-2 2-2h14q2 0 2 2v5z" fill="#1274c5" />
            <path d="M8.500 24.500h13" stroke="#0b4d92" strokeWidth="1.500" />
          </G30>
        </AppIcon>
        <AppIcon $state="open">
          <G30>
            <defs>
              <linearGradient id="edgeTop" x1="0" y1="0" x2="1" y2=".5">
                <stop offset="0" stopColor="#1ba6dd" />
                <stop offset=".55" stopColor="#35c1c9" />
                <stop offset="1" stopColor="#6be05a" />
              </linearGradient>
              <linearGradient id="edgeBody" x1="0" y1="0" x2=".6" y2="1">
                <stop offset="0" stopColor="#1c8fe0" />
                <stop offset="1" stopColor="#0c62bd" />
              </linearGradient>
            </defs>
            <circle cx="15" cy="15" r="15" fill="url(#edgeBody)" />
            <path d="M0 14C1 5 8 0 15 0c9 0 15 6 15 13 0 5-4 8-8 8-5 0-6-2-5-4 3-3 1-8-5-9-6-.5-10 2-12 6z" fill="url(#edgeTop)" />
            <path d="M12 12c-5 4-4 13 3 17.500 5 1 10-1.500 13-6-9 4-17-3-13-11z" fill="#15559f" />
            <path d="M17 17c-1 2 0 4 5 4 3 0 6-1 8-4v7.500l-2.500-1.500c-6 2.500-13 0-13-6 0-3 1-5 2.500-5.500 1.500 1 1.500 3 0 5.500z" fill="#eee" />
          </G30>
        </AppIcon>
        <AppIcon>
          <G30>
            <path d="M8 6V3q0-1.500 1.500-1.500h11Q22 1.500 22 3v3" fill="none" stroke="#20b4f0" strokeWidth="2" />
            <path d="M1 5.500h28v20q0 4-4 4H5q-4 0-4-4z" fill="#14518f" />
            <path d="M9 12h5v5H9z" fill="#f25022" />
            <path d="M15.500 12h5v5h-5z" fill="#7fba00" />
            <path d="M9 18.500h5v5H9z" fill="#00a4ef" />
            <path d="M15.500 18.500h5v5h-5z" fill="#ffb900" />
          </G30>
        </AppIcon>
        <AppIcon $state="open">
          <G30>
            {gear.map((a) => (
              <path key={a} d="M10.500 8l1.200-6.500q.2-1 1.300-1h4q1.100 0 1.300 1L19.500 8z" fill="#79818a" transform={`rotate(${a + 22.500} 15 15)`} />
            ))}
            <circle cx="15" cy="15" r="11" fill="#79818a" />
            <circle cx="15" cy="15" r="6.500" fill="#eceff1" />
            <circle cx="15" cy="15" r="5" fill="#0f62b0" />
          </G30>
        </AppIcon>
        <AppIcon $state="open">
          <G30>
            <ellipse cx="15" cy="26" rx="9" ry="3.500" fill="#b9bec8" />
            <path d="M8 24l7 4 7-4" stroke="#4a5878" fill="none" strokeWidth="1.500" />
            <path d="M3 5l12-4 12 4-2 15-10 6-10-6z" fill="#dfe5ee" stroke="#7d8aa3" strokeWidth=".8" />
            <path d="M6 5.500L15 3l9 2.500-9 4z" fill="#1d3358" />
            <path d="M5 8l9 4v11l-7-4.500z" fill="#1d3a66" />
            <path d="M25 8l-9 4v11l7-4.500z" fill="#2c4f85" />
          </G30>
        </AppIcon>
        <AppIcon $state="open">
          <G30>
            <rect width="30" height="30" fill="#34353f" />
            <path d="M2 28C9 29 11 25 8.500 20 6 12 11 6.500 18 6.500c6 0 9.500 4.500 9.500 9.500 0 5.500-4 8.500-8.500 8.500-4 0-6-3-6-6s2-5 5-5 4 2 4 3.500" fill="none" stroke="#e9294f" strokeWidth="4.200" />
            <rect width="12" height="9.500" fill="#f5f5f5" />
            <text x="1.500" y="7.500" fontFamily="Liberation Mono" fontSize="7.500" fontWeight="700" fill="#222">
              64
            </text>
          </G30>
        </AppIcon>
        <AppIcon $state="open">
          <G30>
            <path d="M1 2h28v27H3l-2-2z" fill="#1c3fc9" />
            <path d="M9 2h13v9H9z" fill="#c9cdd6" />
            <path d="M17 3h3.500v7H17z" fill="#1c3fc9" />
            <path d="M4 13h22v15H4z" fill="#fdf3f3" />
            <path d="M5 16h20M5 19h20M5 22h9M5 25h9" stroke="#f0a3a3" />
            <text x="15" y="26.500" fontFamily="Liberation Mono" fontSize="8" fontWeight="700" fill="#222">
              64
            </text>
          </G30>
        </AppIcon>
        <AppIcon $state="open">
          <G30>
            <circle cx="15" cy="15" r="15" fill="#fcc934" />
            <path d="M2 7.500A15 15 0 0 0 14.500 30L21.500 18.700 15 15 8.500 18.700z" fill="#2f9e4a" />
            <path d="M2 7.500L8.500 18.700 15 15V7.500z" fill="#2f9e4a" />
            <path d="M2 7.500A15 15 0 0 1 28 7.500H15L8.500 11.300 7 13z" fill="#e94235" />
            <circle cx="15" cy="15" r="7.500" fill="#fff" />
            <circle cx="15" cy="15" r="6" fill="#2f7de1" />
          </G30>
        </AppIcon>
        <AppIcon $state="open">
          <G30>
            <circle cx="15" cy="15" r="15" fill="#7d0d14" />
            <path d="M2 20A13 13 0 0 1 10 4v22q-5-1-8-6z" fill="#3a0a10" />
            <path d="M11 7h4.500q6.500 0 6.500 8t-6.500 8H11z" fill="none" stroke="#fff" strokeWidth="4" />
          </G30>
        </AppIcon>
        <AppIcon $state="open">
          <G30>
            <path d="M4 27h22v3H4z" fill="#95520f" />
            <path d="M4 3h22v23H4z" fill="#4fc0da" />
            <path d="M8 9h14M8 14h14M8 19h14" stroke="#12607a" strokeWidth="1.600" transform="translate(0 0.500)" />
            <path d="M7 1v3M11 1v3M15 1v3M19 1v3M23 1v3" stroke="#156a86" strokeWidth="2.400" strokeLinecap="round" />
          </G30>
        </AppIcon>
        <AppIcon $state="active">
          <G30>
            <rect x="0.600" y="4.600" width="28.800" height="21" rx="1" fill="#7fd4f7" stroke="#2b9fdc" strokeWidth="1.200" />
            <circle cx="9" cy="13" r="5.500" fill="#0d6cb8" />
            <path d="M10 12V6.500a5.500 5.500 0 0 1 5 5.500z" fill="#ff9a1f" />
            <path d="M18 13h3M21 8.500v8M21 8.500h3M21 16.500h3" stroke="#0d6cb8" strokeWidth="1.200" fill="none" />
            <path d="M23 7h3v3h-3zM23 15h3v3h-3zM16 11.500h3v3h-3z" fill="#e9f7ff" stroke="#0d6cb8" strokeWidth=".8" />
            <path d="M4 22h10" stroke="#ff9a1f" strokeWidth="1.500" />
            <path d="M14 22h11" stroke="#fff" strokeWidth="1.500" />
          </G30>
        </AppIcon>
      </Apps>
      <Tray>
        <svg width="14" height="8" viewBox="0 0 14 8" fill="none" stroke="#1b1b1b" strokeWidth="1.600">
          <path d="M.8 7.200L7 1l6.200 6.200" />
        </svg>
        <svg width="21" height="18" viewBox="0 0 21 18">
          <path d="M4 14a4 4 0 0 1 0-7.500A6 6 0 0 1 14 3q4 1 4.500 5L10 14z" fill="#9b9b9b" stroke="#4c4c4c" strokeWidth="1.200" />
          <circle cx="14.500" cy="12" r="5.700" fill="#d92632" />
          <path d="M12.500 10l4 4M16.500 10l-4 4" stroke="#fff" strokeWidth="1.400" />
        </svg>
        <Lang>POL</Lang>
        <svg width="20" height="20" viewBox="0 0 20 20" fill="none" stroke="#1b1b1b" strokeWidth="1.300" strokeLinejoin="round">
          <path d="M19.300 10q0-1.500-2-1.500h-4L9 .8H7.300L9 8.500H4.500L3 6H1l1 4-1 4h2l1.500-2.500H9L7.300 19.200H9l4.300-7.700h4q2 0 2-1.500z" />
        </svg>
        <svg width="20" height="18" viewBox="0 0 20 18" fill="none" stroke="#1b1b1b" strokeWidth="1.300">
          <path d="M1 6h3l4-4v14l-4-4H1z" strokeLinejoin="round" />
          <path d="M10.500 6q2.200 3 0 6" />
          <path d="M13 3.500q4 5.500 0 11M15.800 1.500q6 7.500 0 15" stroke="#b9b9b9" />
        </svg>
        <svg width="21" height="18" viewBox="0 0 21 18">
          <rect x="1" y="5" width="16" height="11.500" rx="2.500" fill="none" stroke="#1b1b1b" strokeWidth="1.300" />
          <rect x="3" y="7" width="12" height="7.500" rx="1" fill="#1b1b1b" />
          <path d="M18 8.500q2 .5 2 2.200t-2 2.300z" fill="#1b1b1b" />
          <path d="M5 0L.8 5.500h2.500L2.500 10.500 8 4H4.500z" fill="#1b1b1b" stroke="#eee" strokeWidth=".7" />
        </svg>
        <Clock>
          15:26
          <br />
          11.10.2024
        </Clock>
        <svg width="16" height="19" viewBox="0 0 16 19">
          <path d="M8 0a6 6 0 0 1 6 6v5l2 3.500v1H0v-1L2 11V6a6 6 0 0 1 6-6zM5.500 16.500h5a2.500 2.500 0 0 1-5 0z" fill="#003e92" />
        </svg>
      </Tray>
    </Bar>
  );
}

const blank = ["", "", "", "", "", "", "", ""];

export default function App() {
  return (
    <Desktop>
      <GlobalStyle />
      <Avatar />
      <Player>
        <svg width="70" height="70" viewBox="0 0 70 70">
          <rect width="70" height="70" rx="4" fill="#c9c5b4" />
          <path d="M12 33h50v3l-8 2H26l-12-1z" fill="#2a3038" />
          <path d="M0 50l16-7 12-8h4L18 47 4 55l-4 1zM22 48l12-11h3l-8 11zM15 61l8-7 12-3 5 2-5 6-12 4zM40 37l4 1-2 8-6 6-2-1 5-7zM48 36l3 1 1 8-6 6 2-7zM56 36h3l-1 13-4 9-8 7-8 4-8-1 9-8 11-5 5-7z" fill="#14110e" />
        </svg>
        <Artist>The Statler Brothers</Artist>
        <Plus>
          <svg width="20" height="20" viewBox="0 0 20 20" fill="none" stroke="#a3a3a3" strokeWidth="1.600">
            <circle cx="10" cy="10" r="9" />
            <path d="M5.500 10h9M10 5.500v9" />
          </svg>
        </Plus>
        <PlayerTools>
          <svg width="20" height="20" viewBox="0 0 20 20" fill="none" stroke="currentColor" strokeWidth="1.700">
            <path d="M5 1H2q-1 0-1 1v10q0 1 1 1h3M3 17v2M5 18.500H3" />
            <rect x="8.500" y="1.500" width="10.500" height="17" rx="1" />
            <circle cx="13.800" cy="12" r="2.300" fill="currentColor" stroke="none" />
            <circle cx="13.800" cy="6" r="1.300" fill="currentColor" stroke="none" />
          </svg>
          <svg width="40" height="20" viewBox="-20 0 40 20" fill="none" stroke="currentColor" strokeWidth="1.600">
            <path d="M11 1.500L2 7q-2 3 0 6l9 5.500zM13.500 7q1.500 3 0 6M14 3.500q8 6.500 0 13" />
          </svg>
          <Volume />
          <svg width="20" height="20" viewBox="0 0 20 20" fill="none" stroke="currentColor" strokeWidth="1.800">
            <path d="M9 18H1V2h18v7" />
            <rect x="12" y="12" width="8" height="7" fill="#b5b5b5" stroke="none" />
          </svg>
          <svg width="39" height="17" viewBox="-22 0 39 17" fill="none" stroke="#b5b5b5" strokeWidth="1.700">
            <path d="M10.500 1H16v5.500M16 1l-6 6M6.500 16H1v-5.500M1 16l6-6" />
          </svg>
        </PlayerTools>
      </Player>
      <FormWindow
        x={16}
        y={9}
        title="Form-for->Poland.kml-System-RYCHo@HE"
        lines={["Label202", "Bor", "File", "Sor", "Eur", "Wil", "Key", "1 paździe"]}
        unlock="Uwoln"
        last="2 paździe"
        date="11.10.202"
      />
      <FormWindow x={655} y={1} lines={blank} last="y" indent={1045} />
      <FormWindow x={303} y={62} lines={[...blank.slice(1), "1"]} last="2" date="11.10.202" />
      <Explorer />
      <SharingCenter />
      <WifiStatus />
      <EthernetStatus />
      <DetailsWindow x={563} y={482} rows={wifiRows} />
      <DetailsWindow x={1074} y={467} active rows={ethernetRows} />
      <Taskbar />
    </Desktop>
  );
}
